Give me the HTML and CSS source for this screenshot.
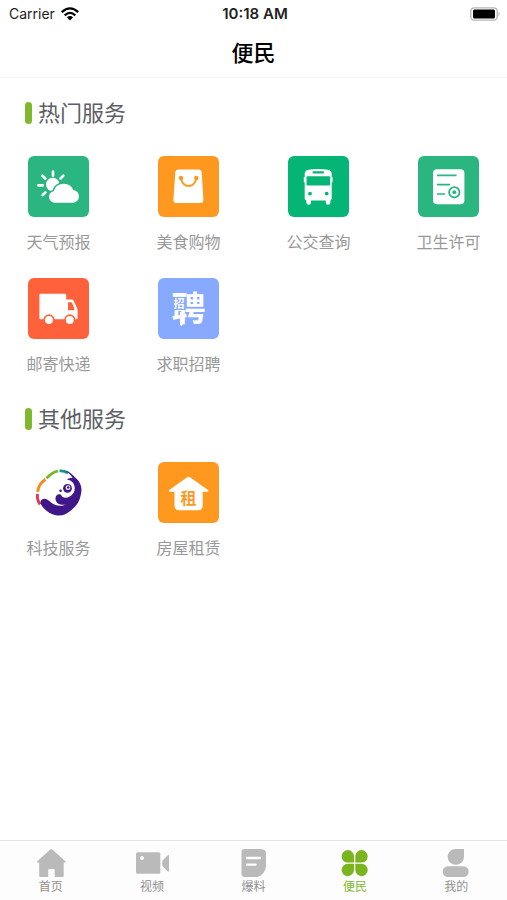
FILE: index.html
```html
<!DOCTYPE html>
<html lang="zh-CN">
<head>
<meta charset="utf-8">
<meta name="viewport" content="width=device-width, initial-scale=1">
<title>便民</title>
<link rel="stylesheet" href="styles.css">
</head>
<body>
<div class="status">
  <span class="carrier">Carrier
    <svg width="18" height="14" viewBox="0 0 18 14" aria-hidden="true"><g fill="none" stroke="#000" stroke-width="2.3"><path d="M.8 5.2Q9-2.4 17.2 5.2"/><path d="M3.7 8.3Q9 3.5 14.3 8.3"/></g><path d="M5.9 10.2Q9 7.6 12.1 10.2L9 13.5z"/></svg>
  </span>
  <time class="time">10:18 AM</time>
  <span class="battery">
    <svg width="31" height="14" viewBox="0 0 31 14" aria-hidden="true"><rect x=".8" y=".8" width="26.4" height="12.4" rx="3.5" fill="#fff" stroke="#b5b5b5" stroke-width="1.3"/><rect x="3" y="2.6" width="22" height="8.8" rx="1.5"/><path d="M28.5 4.6q2.2 2.4 0 4.8z" fill="#aaa"/></svg>
  </span>
</div>
<header class="header"><h1>便民</h1></header>
<main class="content">
  <section class="section">
    <h2>热门服务</h2>
    <nav class="grid" aria-label="热门服务">
      <a class="item" href="#weather">
        <svg class="icon" viewBox="0 0 61 61" aria-hidden="true"><rect width="61" height="61" rx="6" fill="#2bb581"/><circle cx="24.7" cy="28.5" r="6.7" fill="#fff"/><path d="M25 15.600v4.200M35.300 19.700l-2.700 2.800M14.400 19.700l2.900 2.800M10.400 29.400h4.300M14.600 39.200l2.800-2.800" stroke="#fff" stroke-width="2.600" stroke-linecap="round"/><path d="M26.500 46.700a5.800 5.800 0 0 1-.8-11.500 10.500 10.500 0 0 1 19.600-1.200 6.400 6.400 0 0 1 .2 12.700z" fill="#fff" stroke="#2bb581" stroke-width="3.200" paint-order="stroke"/></svg>
        <span>天气预报</span></a>
      <a class="item" href="#shopping">
        <svg class="icon" viewBox="0 0 61 61" aria-hidden="true"><rect width="61" height="61" rx="6" fill="#ff981f"/><path d="M20.500 13.500h20q3 0 3.200 3L45.400 43.500q.2 3.500-3.100 3.500H18.500q-3.300 0-3.100-3.500L17.300 16.500q.2-3 3.200-3z" fill="#fff"/><g fill="#ff981f"><circle cx="23" cy="22" r="2.200"/><circle cx="38.300" cy="22" r="2.200"/></g><path d="M23 22c1.500 10.700 13.800 10.700 15.300 0" fill="none" stroke="#ff981f" stroke-width="2"/></svg>
        <span>美食购物</span></a>
      <a class="item" href="#bus">
        <svg class="icon" viewBox="0 0 61 61" aria-hidden="true"><rect width="61" height="61" rx="6" fill="#04b575"/><path d="M20.500 13.800q9.700-1.600 19.400 0 3.800.7 3.800 4.200v3.200h.9v5h-.9v16.300q0 2-2 2h-23q-2 0-2-2V26.200h-.9v-5h.9V18q0-3.500 3.800-4.200z" fill="#fff"/><path d="M18.400 43H23v3.500a2.300 2.300 0 0 1-4.600 0zM37.800 43h4.600v3.500a2.300 2.300 0 0 1-4.600 0z" fill="#fff"/><g fill="#04b575"><rect x="24.500" y="15.300" width="11.500" height="2.200" rx="1"/><rect x="18.500" y="20.200" width="23.700" height="9.200" rx="1"/><circle cx="22" cy="37.600" r="1.900"/><circle cx="38.700" cy="37.600" r="1.900"/></g></svg>
        <span>公交查询</span></a>
      <a class="item" href="#license">
        <svg class="icon" viewBox="0 0 61 61" aria-hidden="true"><rect width="61" height="61" rx="6" fill="#2bb581"/><rect x="15" y="13.200" width="31.400" height="35" rx="4" fill="#fff"/><g fill="none" stroke="#2bb581"><path d="M19 19.300h19.600M19 28.700h13M19 38h8" stroke-width="1.700"/><circle cx="36.300" cy="36.300" r="5.200" stroke-width="1.800"/></g><circle cx="36.300" cy="36.300" r="2" fill="#2bb581"/></svg>
        <span>卫生许可</span></a>
      <a class="item" href="#express">
        <svg class="icon" viewBox="0 0 61 61" aria-hidden="true"><rect width="61" height="61" rx="6" fill="#ff613a"/><path d="M12.600 15.700H37q1.200 0 1.200 1.200v4.600h5.500q1.400 0 2.100 1.400l3.200 7q.6 1.300.6 3v7.200q0 1.200-1.200 1.200H12.600q-1.200 0-1.200-1.200V16.900q0-1.200 1.200-1.200z" fill="#fff"/><path d="M40 24.200h3q.8 0 1.100.8l2.100 5.200v2H40z" fill="#ff613a"/><g fill="#fff" stroke="#ff613a" stroke-width="1.700"><circle cx="21" cy="42" r="4.800"/><circle cx="41.800" cy="42" r="4.800"/></g></svg>
        <span>邮寄快递</span></a>
      <a class="item" href="#jobs">
        <svg class="icon" viewBox="0 0 61 61" aria-hidden="true"><rect width="61" height="61" rx="6" fill="#87a9ff"/><text class="glyph" x="30.500" y="42.500" font-size="34" fill="#fff">聘</text><path d="M13.500 19h14.300v13H13.500z" fill="#87a9ff"/><path d="M22 34h4.500v10l-3 4-1.500-1z" fill="#fff"/><text class="glyph" x="21" y="30" font-size="11" fill="#fff">招</text></svg>
        <span>求职招聘</span></a>
    </nav>
  </section>
  <section class="section">
    <h2>其他服务</h2>
    <nav class="grid" aria-label="其他服务">
      <a class="item" href="#tech">
        <svg class="icon" viewBox="0 0 61 61" aria-hidden="true"><g fill="none" stroke-width="2.900"><path d="M12 42.500Q8.800 37.500 9.500 32" stroke="#e33850"/><path d="M9.700 29.800C10.300 24.500 12.800 20.500 17.500 17.300" stroke="#f58a1f"/><path d="M18.500 16.300C22.500 12 25.500 9.600 30 9.100" stroke="#78b52a"/><path d="M31.500 8.900Q36 8.500 40 11" stroke="#14958b"/></g><path d="M37.500 8.700C42.500 9.700 44.500 13 48 16.200 53 20.500 54.300 26 53 32 52 38.500 49 43.500 44 47.500 39 52 34 54.500 28 53.300 23 52.500 19 49.500 15.500 46 12.500 42.500 11.500 40 13.500 38 16.500 35.500 19.500 37.500 22.500 40 26 43 32 45.500 38 42.500 34 43.500 28.500 42.500 27.500 37.500 27 33.500 30 31.300 33 32.800 34.500 37.500 42 36.500 45.500 31 48.500 25.500 46 18.500 39 17.500 41.500 15.500 44 16.500 44.500 15.800 42.500 12 40 11 37.500 8.700z" fill="#401789"/><circle cx="39.500" cy="26.300" r="4.400" fill="#401789"/><circle cx="40" cy="25.700" r="2.400" fill="#fff"/><circle cx="40.200" cy="25.500" r="1.300" fill="#401789"/><circle cx="32.600" cy="28.800" r="1.300" fill="#401789"/></svg>
        <span>科技服务</span></a>
      <a class="item" href="#rent">
        <svg class="icon" viewBox="0 0 61 61" aria-hidden="true"><rect width="61" height="61" rx="6" fill="#ff981f"/><path d="M29.200 15.300q1.400-1.200 2.800 0L50 28q1.200 1.700-1 1.800h-4.300v14q0 4.500-4.500 4.500H21q-4.500 0-4.500-4.500v-14h-4.300q-2.200-.1-1-1.800z" fill="#fff"/><text class="glyph" x="30.600" y="42" font-size="16" fill="#ff981f">租</text></svg>
        <span>房屋租赁</span></a>
    </nav>
  </section>
</main>
<nav class="tabs" aria-label="主导航">
  <a href="#home"><svg viewBox="0 0 36 30" aria-hidden="true"><path d="M17.200 1.600q1-1 2 0L32.700 13.500q.5 1-.5 1h-1.500V28q0 1-1 1h-8v-7q0-1-1-1h-4.500q-1 0-1 1v7h-8q-1 0-1-1V14.500H4.500q-1 0-.5-1z"/></svg><span>首页</span></a>
  <a href="#video"><svg viewBox="0 0 36 30" aria-hidden="true"><path fill-rule="evenodd" d="M3.500 4.300h21.300q1.500 0 1.500 1.500v18.400q0 1.500-1.500 1.500H3.500Q2 25.700 2 24.200V5.800q0-1.500 1.500-1.500zM8 8a2 2 0 1 0 .01 0zM35 7v16.700q-.5.300-1.200-.3l-5-5q-.5-.6-.5-1.400v-3.300q0-.8.5-1.400l5-5q.7-.6 1.200-.3z"/></svg><span>视频</span></a>
  <a href="#news"><svg viewBox="0 0 36 30" aria-hidden="true"><path d="M8.500 1h15Q30 1 30 5v13.500Q29 27 21 29H8.500q-3 0-3-3V4q0-3 3-3z"/><path d="M11 10h13M11 16.700h8.500" stroke="#fff" stroke-width="2.300" stroke-linecap="round"/></svg><span>爆料</span></a>
  <a class="active" href="#services" aria-current="page"><svg viewBox="0 0 36 30" aria-hidden="true"><path d="M17 14.500h-6.300A6.200 6.200 0 1 1 17 8.300zM18.300 14.500h6.300a6.200 6.200 0 1 0-6.300-6.200zM17 15.800h-6.300A6.200 6.200 0 1 0 17 22zM18.300 15.800h6.300a6.200 6.200 0 1 1-6.300 6.200z"/></svg><span>便民</span></a>
  <a href="#me"><svg viewBox="0 0 36 30" aria-hidden="true"><path d="M18 1h8v7.700A8.200 7.900 0 1 1 18 1z"/><rect x="4.700" y="18.200" width="26" height="10.800" rx="5.300"/></svg><span>我的</span></a>
</nav>
</body>
</html>
```
FILE: styles.css
```css
* { box-sizing: border-box; }

body {
  margin: 0;
  min-height: 100vh;
  display: flex;
  flex-direction: column;
  background: #fff;
  font-family: "Noto Sans CJK SC", sans-serif;
}

a { text-decoration: none; }

.status {
  display: grid;
  grid-template-columns: 1fr auto 1fr;
  align-items: center;
  height: 27px;
  padding: 0 6px 0 9px;
  font: 14px/27px Inter, sans-serif;
  color: #222;
}

.carrier {
  display: flex;
  align-items: center;
  gap: 6px;
}

.time {
  font-size: 15px;
  font-weight: 600;
}

.battery {
  display: flex;
  justify-content: flex-end;
}

.header {
  height: 51px;
  border-bottom: 1px solid #f7f7f7;
  text-align: center;
}

.header h1 {
  margin: 0;
  font-size: 22px;
  font-weight: 500;
  line-height: 48px;
  color: #000;
}

.content {
  flex: 1;
  padding: 20px 25px;
}

.section { margin-bottom: 29px; }

.section h2 {
  display: flex;
  align-items: flex-start;
  gap: 6px;
  margin: 0 0 32px;
  font-size: 22px;
  font-weight: 400;
  line-height: 26px;
  color: #5c6066;
}

.section h2::before {
  content: "";
  width: 7px;
  height: 22px;
  margin-top: 4px;
  border-radius: 4px;
  background: #7fb82c;
}

.grid {
  display: grid;
  grid-template-columns: repeat(4, 67px);
  justify-content: space-between;
  row-gap: 25px;
}

.item {
  display: flex;
  flex-direction: column;
  align-items: center;
  gap: 12px;
  font-size: 16px;
  line-height: 24px;
  color: #999;
  white-space: nowrap;
}

.icon {
  width: 61px;
  height: 61px;
}

.glyph {
  font-weight: 700;
  text-anchor: middle;
}

.tabs {
  display: flex;
  padding: 7px 0 6px;
  border-top: 1px solid #e4e4e4;
  background: #fdfdfd;
}

.tabs a {
  flex: 1;
  display: flex;
  flex-direction: column;
  align-items: center;
  font-size: 12px;
  line-height: 16px;
  color: #909090;
}

.tabs svg {
  width: 36px;
  height: 30px;
  fill: #bababa;
}

.tabs .active { color: #7fb82c; }

.tabs .active svg { fill: #7ab51f; }
```
